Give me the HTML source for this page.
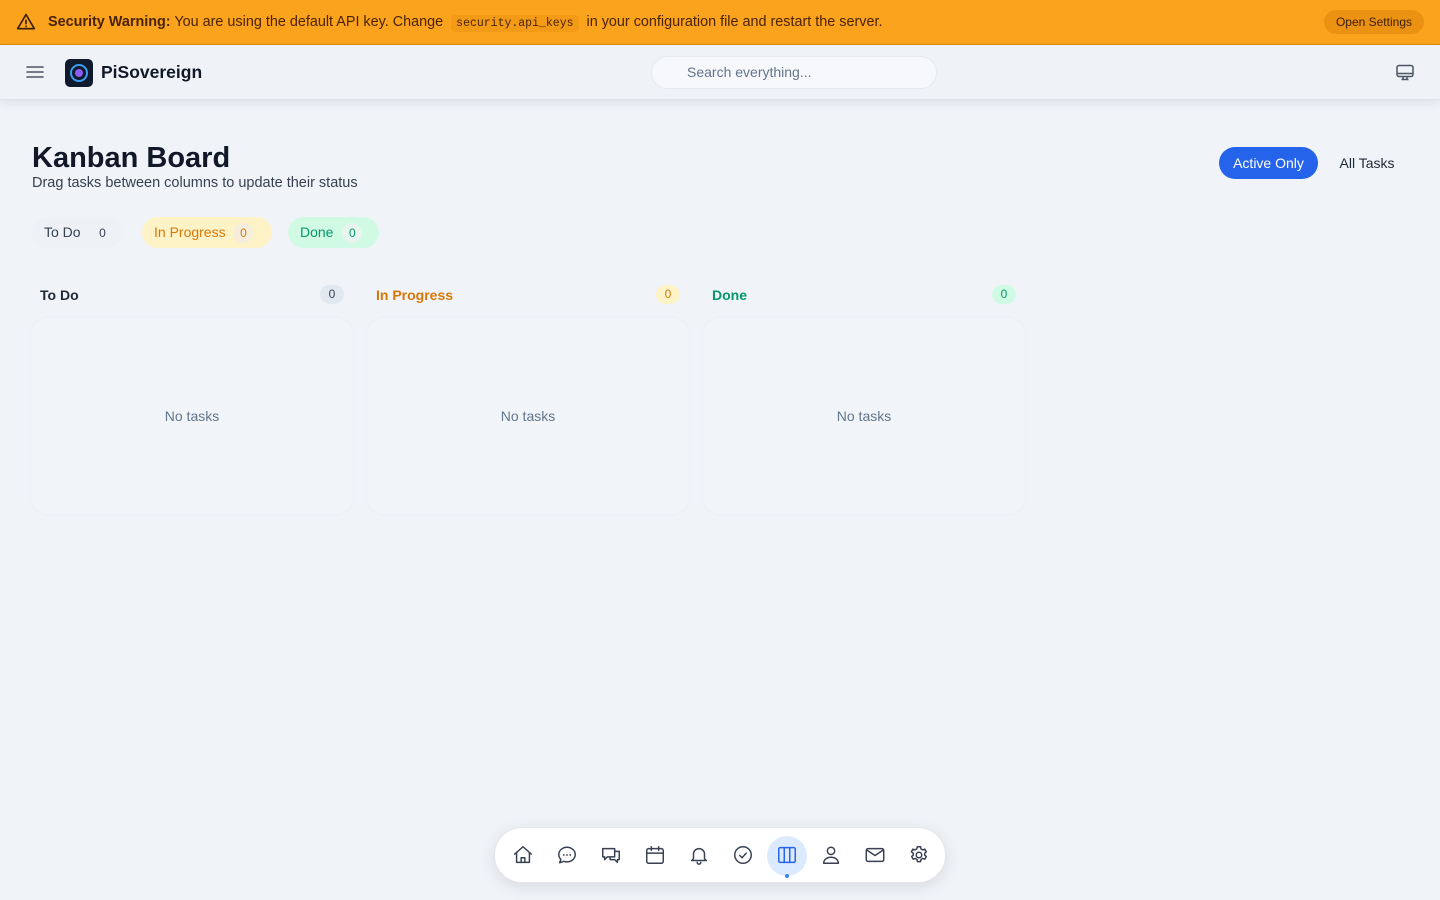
<!DOCTYPE html>
<html><head><meta charset="utf-8"><style>
*{box-sizing:border-box;margin:0;padding:0}
body{width:1440px;height:900px;background:#f0f4f9;font-family:"Liberation Sans",sans-serif;color:#111827;position:relative;overflow:hidden}
.warn{position:absolute;left:0;top:0;width:1440px;height:45px;background:#fba31c;border-bottom:1px solid #e08a0c;display:flex;align-items:center;font-size:14.4px;color:#4a2306}
.warn code{font-family:"Liberation Mono",monospace;font-size:11.5px;background:#f39a16;padding:2px 5px;border-radius:4px;margin:0 4px}
.osb{position:absolute;right:16px;top:10px;height:24px;padding:0 12px;border-radius:12px;background:#ec9212;font-size:12px;line-height:24px;color:#3b1d05}
.hdr{position:absolute;left:0;top:45px;width:1440px;height:55px;background:#eff3f8;box-shadow:0 3px 10px rgba(0,0,0,.08);border-bottom:1px solid #dfe3ea}
.search{position:absolute;left:651px;top:11px;width:286px;height:33px;border-radius:17px;background:#f6f8fb;border:1px solid #e6eaf0;font-size:14px;color:#64748b;padding-left:35px;line-height:31px}
.abs{position:absolute}
.pill{position:absolute;height:31px;border-radius:16px;font-size:14px;line-height:31px;padding-left:12px}
.cnt{display:inline-block;width:20px;height:20px;border-radius:10px;text-align:center;line-height:20px;font-size:12px}
.colh{position:absolute;top:287px;font-size:14px;font-weight:bold}
.badge{position:absolute;top:285px;width:24px;height:19px;border-radius:10px;font-size:12px;text-align:center;line-height:19px}
.card{position:absolute;top:318px;width:320px;height:196px;border-radius:16px;background:#f1f5f9;box-shadow:0 0 4px rgba(0,0,0,.03);text-align:center;line-height:196px;font-size:14px;color:#64748b}
.nav{position:absolute;left:494px;top:827px;width:452px;height:56px;border-radius:28px;background:#fff;box-shadow:0 4px 16px rgba(0,0,0,.1);border:1px solid #e5e7eb}
.nav svg{position:absolute;top:16px;width:22px;height:22px;fill:none;stroke:#374151;stroke-width:1.6;stroke-linecap:round;stroke-linejoin:round}
</style></head><body>
<div class="warn">
<svg class="abs" style="left:16px;top:12px" width="20" height="20" viewBox="0 0 24 24" fill="none" stroke="#3b1d05" stroke-width="2" stroke-linejoin="round"><path d="M12 3L2 20h20L12 3z"/><path d="M12 10v4M12 17v.5" stroke-linecap="round"/></svg>
<span style="margin-left:48px"><b>Security Warning:</b> You are using the default API key. Change <code>security.api_keys</code> in your configuration file and restart the server.</span>
<div class="osb">Open Settings</div></div>
<div class="hdr">
<svg class="abs" style="left:26px;top:19px" width="18" height="16" viewBox="0 0 18 16" stroke="#4b5563" stroke-width="1.6" stroke-linecap="round"><path d="M1 3h16M1 8h16M1 13h16"/></svg>
<div class="abs" style="left:65px;top:14px;width:28px;height:28px;border-radius:5px;background:#0f1b2d"><div class="abs" style="left:5px;top:5px;width:18px;height:18px;border-radius:50%;border:2px solid #3b9cf0"></div><div class="abs" style="left:10px;top:10px;width:8px;height:8px;border-radius:50%;background:#8b5cf6"></div></div>
<div class="abs" style="left:101px;top:17px;font-size:17.5px;font-weight:bold;color:#111827">PiSovereign</div>
<div class="search">Search everything...</div>
<svg class="abs" style="left:1395px;top:19px" width="20" height="18" viewBox="0 0 20 18" fill="none" stroke="#4b5563" stroke-width="1.5"><rect x="2" y="1.5" width="16" height="11" rx="2"/><path d="M2 9.5h16M8 12.5v3M12 12.5v3M6.5 15.5h7"/></svg>
</div>
<div class="abs" style="left:32px;top:142px;font-size:29px;font-weight:bold">Kanban Board</div>
<div class="abs" style="left:32px;top:175px;font-size:14.5px;color:#374151">Drag tasks between columns to update their status</div>
<div class="abs" style="left:1219px;top:147px;width:99px;height:32px;border-radius:16px;background:#2563eb;color:#fff;font-size:14px;text-align:center;line-height:32px">Active Only</div>
<div class="abs" style="left:1328px;top:147px;width:78px;height:32px;font-size:14px;text-align:center;line-height:32px;color:#1f2937">All Tasks</div>
<div class="pill" style="left:32px;top:217px;width:90px;background:#eef2f7;color:#374151">To Do <span class="cnt" style="margin-left:8px">0</span></div>
<div class="pill" style="left:142px;top:217px;width:130px;background:#fef3c7;color:#d97706">In Progress <span class="cnt" style="margin-left:4px;background:#f5eedd">0</span></div>
<div class="pill" style="left:288px;top:217px;width:91px;background:#d1fae5;color:#059669">Done <span class="cnt" style="margin-left:5px;background:#e7f5ee">0</span></div>
<div class="colh" style="left:40px;color:#1f2937">To Do</div><div class="badge" style="left:320px;background:#e2e8f0;color:#374151">0</div>
<div class="colh" style="left:376px;color:#d97706">In Progress</div><div class="badge" style="left:656px;background:#fef3c7;color:#d97706">0</div>
<div class="colh" style="left:712px;color:#059669">Done</div><div class="badge" style="left:992px;background:#d1fae5;color:#059669">0</div>
<div class="card" style="left:32px">No tasks</div>
<div class="card" style="left:368px">No tasks</div>
<div class="card" style="left:704px">No tasks</div>
<div class="nav">
<div class="abs" style="left:272px;top:8px;width:40px;height:40px;border-radius:50%;background:#dbeafe"></div>
<div class="abs" style="left:290px;top:46px;width:4px;height:4px;border-radius:50%;background:#3b82f6"></div>
<svg style="left:17px" viewBox="0 0 24 24"><path d="M3 11l9-8 9 8M5 9.5V20h14V9.5M10 20v-5h4v5"/></svg>
<svg style="left:61px" viewBox="0 0 24 24"><path d="M12 3.5c5 0 9 3.6 9 8s-4 8-9 8c-1.3 0-2.5-.2-3.6-.6L4 20.5l1.3-3.6C4 15.5 3 13.6 3 11.5c0-4.4 4-8 9-8z"/><path d="M8.5 12h.01M12 12h.01M15.5 12h.01" stroke-width="2"/></svg>
<svg style="left:105px" viewBox="0 0 24 24"><path d="M3 5h13v9H8l-3 3v-3H3zM16 8h5v9h-2v3l-3-3h-5v-3"/></svg>
<svg style="left:149px" viewBox="0 0 24 24"><rect x="3" y="5" width="18" height="16" rx="2"/><path d="M3 10h18M8 3v4M16 3v4"/></svg>
<svg style="left:193px" viewBox="0 0 24 24"><path d="M6 16V11a6 6 0 0112 0v5l2 2H4zM10 20a2 2 0 004 0"/></svg>
<svg style="left:237px" viewBox="0 0 24 24"><circle cx="12" cy="12" r="9"/><path d="M8.5 12.5l2.5 2.5 4.5-5"/></svg>
<svg style="left:281px" viewBox="0 0 24 24"><rect x="3" y="4" width="18" height="16" rx="1.5" stroke="#2563eb"/><path d="M9 4v16M15 4v16" stroke="#2563eb"/></svg>
<svg style="left:325px" viewBox="0 0 24 24"><circle cx="12" cy="7.5" r="4"/><path d="M4 21c0-4 3.5-6.5 8-6.5s8 2.5 8 6.5z"/></svg>
<svg style="left:369px" viewBox="0 0 24 24"><rect x="2.5" y="5" width="19" height="14" rx="2"/><path d="M3 6.5l9 6 9-6"/></svg>
<svg style="left:413px" viewBox="0 0 24 24"><circle cx="12" cy="12" r="3"/><path d="M10.3 3h3.4l.5 2.4 1.8 1 2.3-.8 1.7 2.9-1.8 1.6v2l1.8 1.6-1.7 2.9-2.3-.8-1.8 1-.5 2.4h-3.4l-.5-2.4-1.8-1-2.3.8-1.7-2.9 1.8-1.6v-2L3.7 8.5l1.7-2.9 2.3.8 1.8-1z"/></svg>
</div>
</body></html>
